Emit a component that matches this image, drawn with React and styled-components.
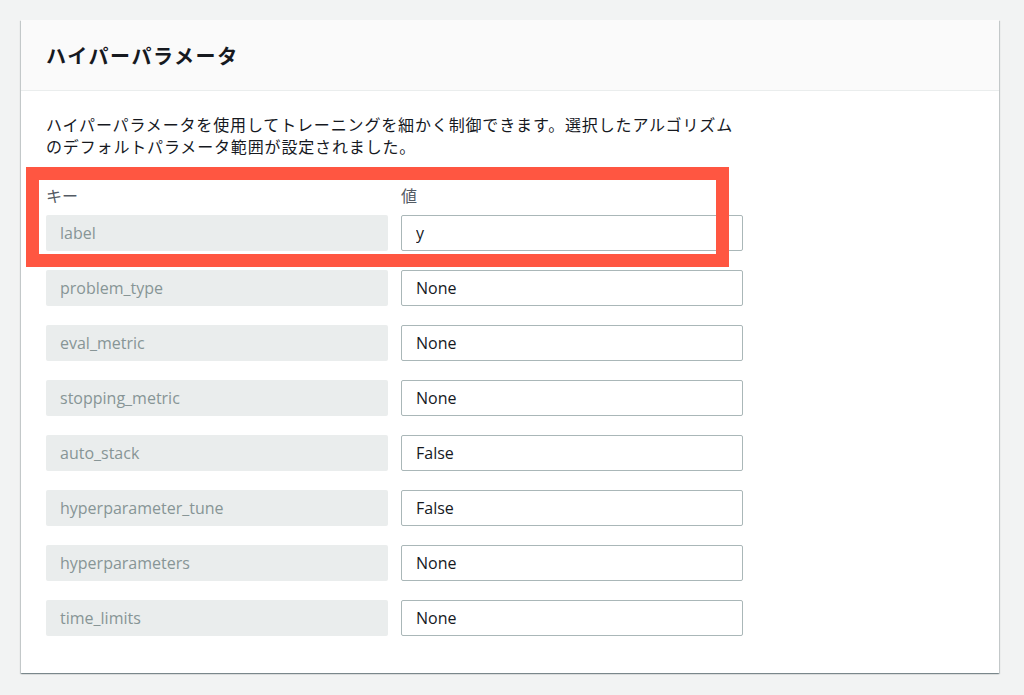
import React from "react";
import styled, { createGlobalStyle } from "styled-components";

const GlobalStyle = createGlobalStyle`
  html, body {
    margin: 0;
    padding: 0;
    background: #f2f3f3;
  }
  body {
    font-family: "Open Sans", "Noto Sans CJK JP", sans-serif;
    color: #16191f;
  }
  * { box-sizing: border-box; }
`;

const Page = styled.div`
  width: 1024px;
  height: 695px;
  padding: 20px 25px 0 21px;
  background: #f2f3f3;
  overflow: hidden;
`;

const Card = styled.section`
  position: relative;
  background: #ffffff;
  box-shadow: 0 1px 1px 0 rgba(0, 28, 36, 0.3), 1px 1px 1px 0 rgba(0, 28, 36, 0.15),
    -1px 1px 1px 0 rgba(0, 28, 36, 0.15);
`;

const Header = styled.header`
  height: 71px;
  display: flex;
  align-items: center;
  padding: 0 25px;
  background: #fafafa;
  border-bottom: 1px solid #eaeded;
`;

const Title = styled.h2`
  margin: 0;
  font-family: "Noto Sans CJK JP", sans-serif;
  font-size: 20px;
  font-weight: 700;
  letter-spacing: 1.6px;
  color: #16191f;
`;

const Body = styled.div`
  padding: 22px 25px 37px;
`;

const Description = styled.p`
  margin: 0 0 27px;
  font-family: "Noto Sans CJK JP", sans-serif;
  font-size: 16px;
  line-height: 22px;
  letter-spacing: 0.85px;
  color: #16191f;
`;

const FieldGrid = styled.div`
  display: grid;
  grid-template-columns: 342px 342px;
  column-gap: 13px;
  row-gap: 19px;
`;

const ColumnLabel = styled.div`
  font-family: "Noto Sans CJK JP", sans-serif;
  font-size: 16px;
  line-height: 22px;
  color: #545b64;
  margin-bottom: -10px;
`;

const KeyBox = styled.div`
  height: 36px;
  display: flex;
  align-items: center;
  padding: 0 14px;
  background: #eaeded;
  border-radius: 2px;
  font-size: 16px;
  color: #879596;
`;

const ValueInput = styled.input`
  height: 36px;
  width: 100%;
  padding: 0 14px;
  border: 1px solid #aab7b8;
  border-radius: 2px;
  background: #ffffff;
  font-family: "Open Sans", "Noto Sans CJK JP", sans-serif;
  font-size: 16px;
  color: #16191f;
  outline: none;
`;

const Highlight = styled.div`
  position: absolute;
  left: 5px;
  top: 147px;
  width: 703px;
  height: 100px;
  border: 13px solid #ff5641;
  pointer-events: none;
`;

const params = [
  ["label", "y"],
  ["problem_type", "None"],
  ["eval_metric", "None"],
  ["stopping_metric", "None"],
  ["auto_stack", "False"],
  ["hyperparameter_tune", "False"],
  ["hyperparameters", "None"],
  ["time_limits", "None"],
];

export default function App() {
  return (
    <>
      <GlobalStyle />
      <Page>
        <Card>
          <Header>
            <Title>ハイパーパラメータ</Title>
          </Header>
          <Body>
            <Description>
              ハイパーパラメータを使用してトレーニングを細かく制御できます。選択したアルゴリズム
              <br />
              のデフォルトパラメータ範囲が設定されました。
            </Description>
            <FieldGrid>
              <ColumnLabel>キー</ColumnLabel>
              <ColumnLabel>値</ColumnLabel>
              {params.map(([k, v]) => (
                <React.Fragment key={k}>
                  <KeyBox>{k}</KeyBox>
                  <ValueInput defaultValue={v} readOnly />
                </React.Fragment>
              ))}
            </FieldGrid>
          </Body>
          <Highlight />
        </Card>
      </Page>
    </>
  );
}
